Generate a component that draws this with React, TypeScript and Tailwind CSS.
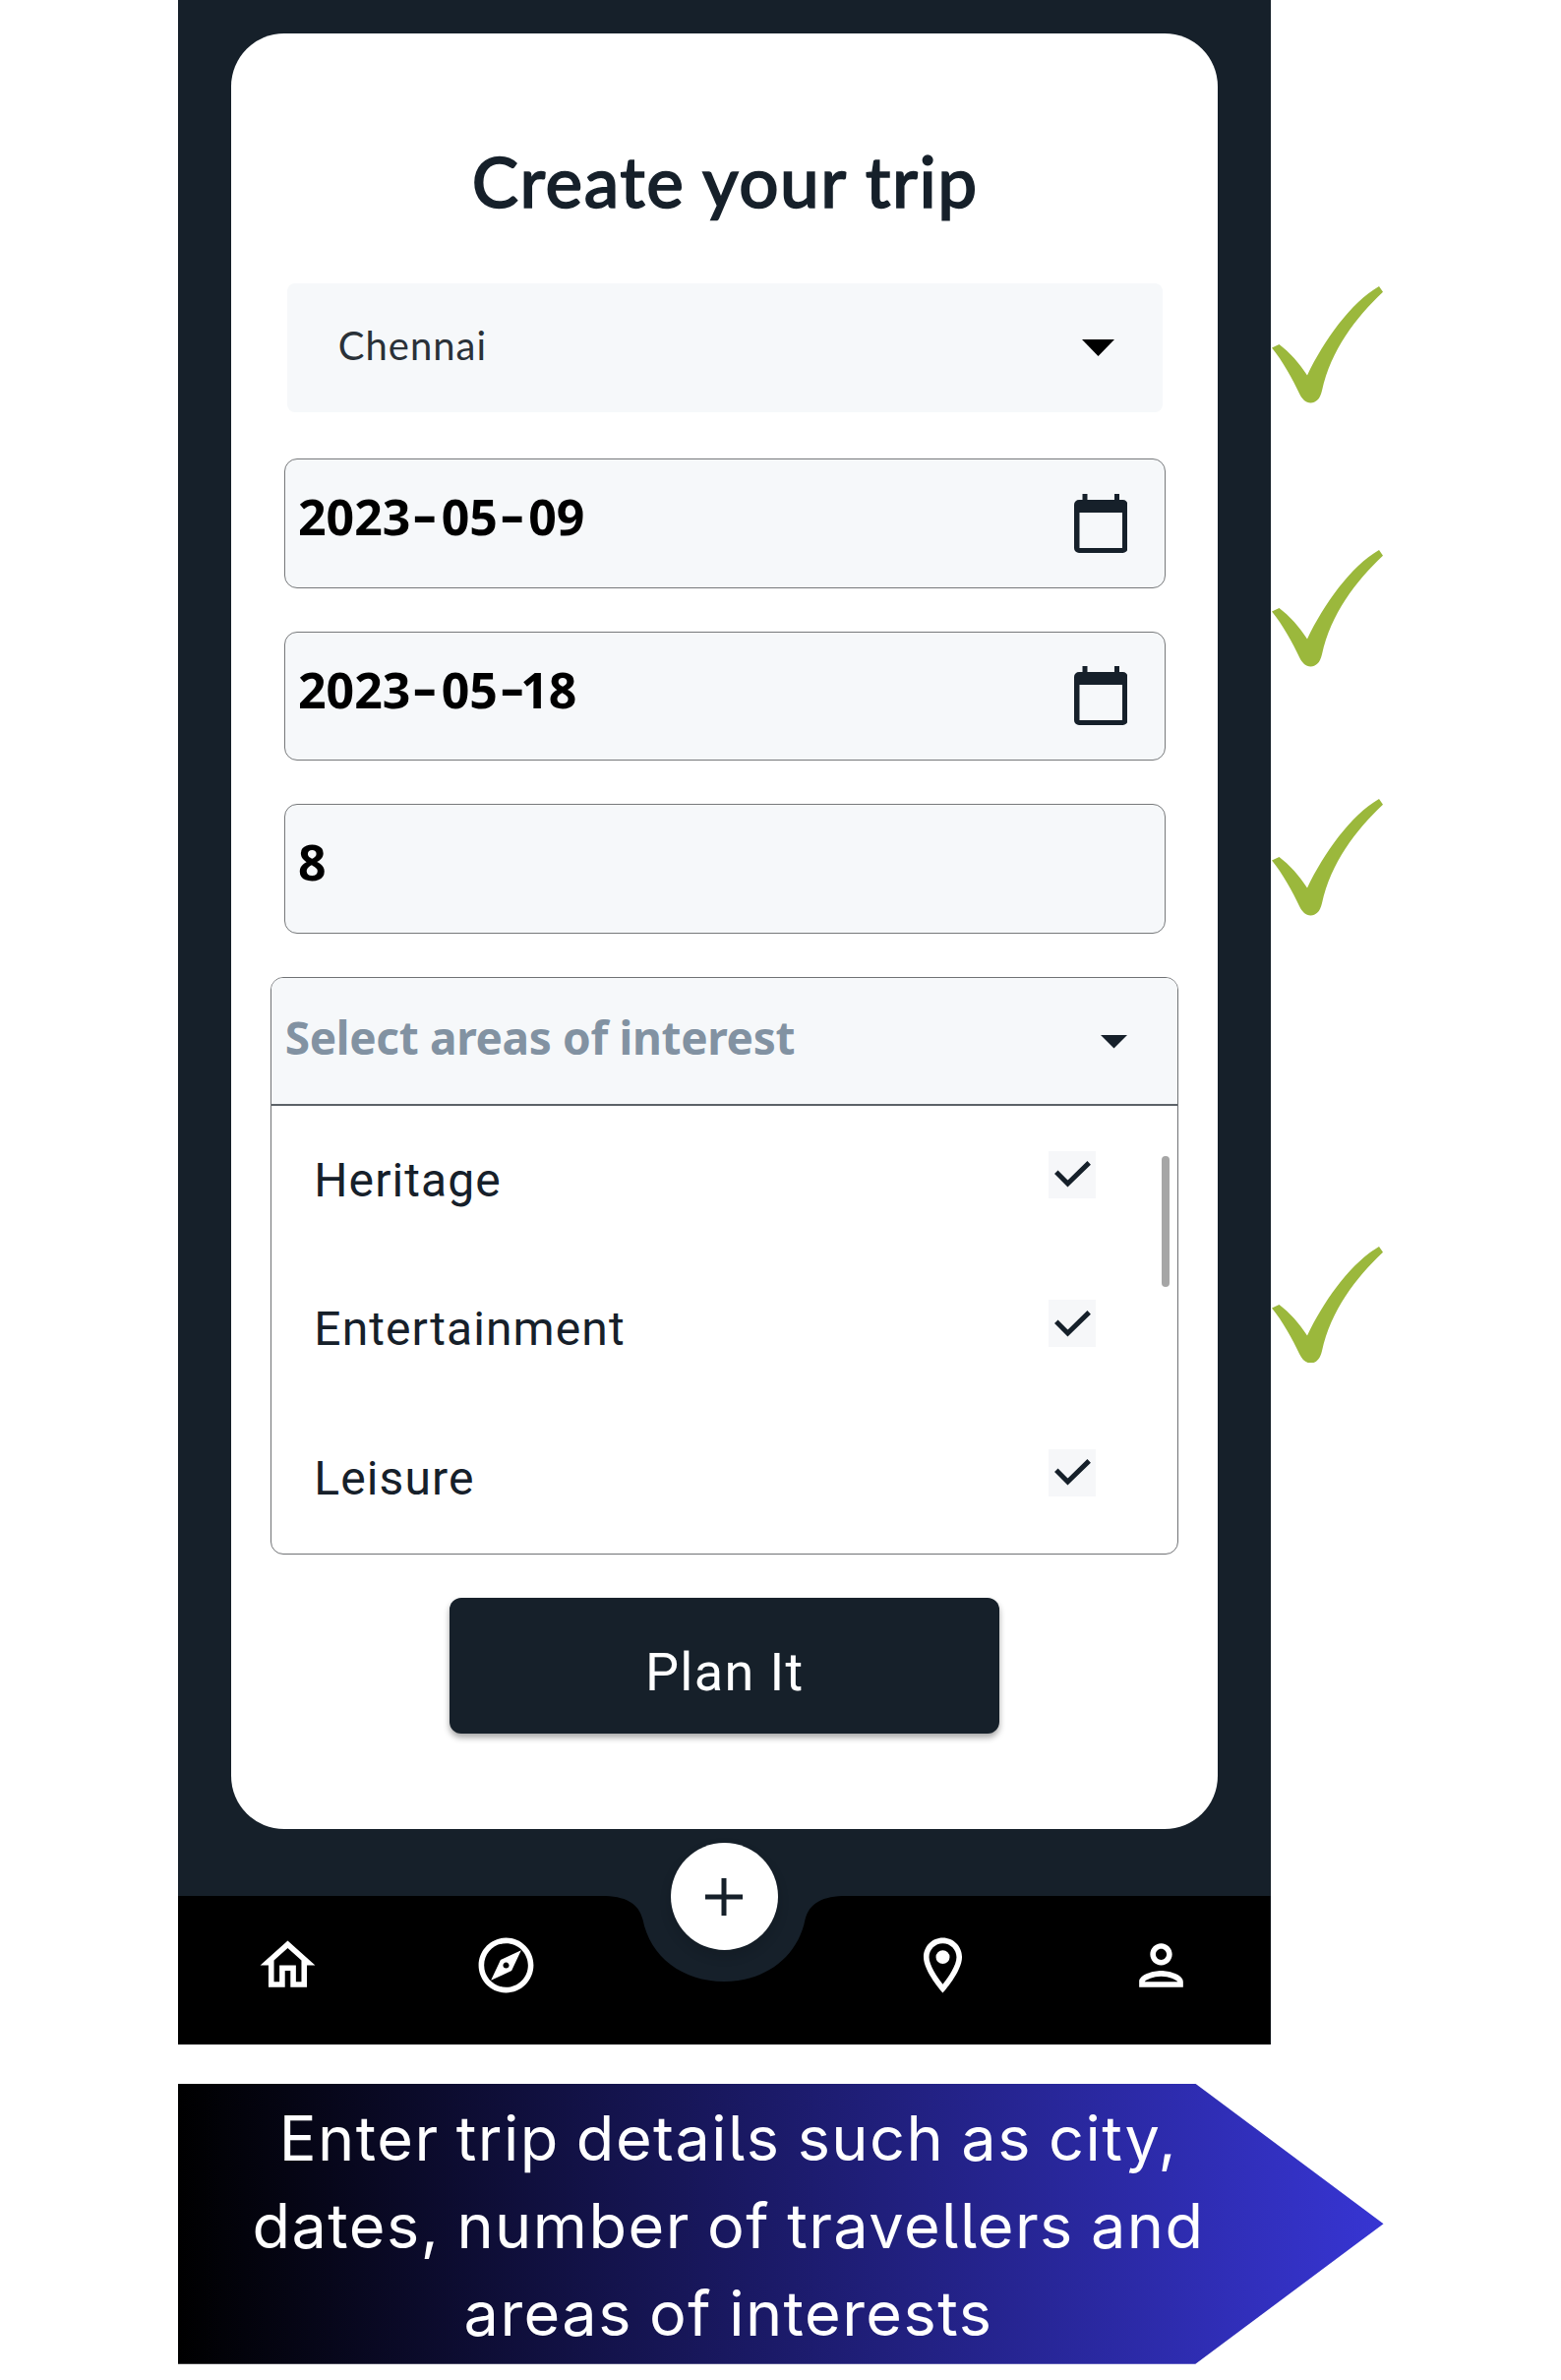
import type { ReactNode } from "react";

function GreenCheck({ className }: { className: string }) {
  return (
    <svg className={`h-[118.5px] w-[113px] shrink-0 ${className}`} viewBox="0 0 113 118.5" fill="#9bb83c">
      <path d="M0 62.5 L7.5 59 C18 67 28 78 36 90.5 C53 55 80 17 109 0 L113 5.7 C85 32 60 65 51 106 C49 115 44.5 118.4 39.5 118.4 C34.5 118.4 31 115 28 109 C21 94 11 76 0 62.5Z" />
    </svg>
  );
}

function CalendarIcon() {
  return (
    <svg className="h-[60px] w-[54.5px]" viewBox="0 0 54.5 60" fill="#16202a">
      <path
        fillRule="evenodd"
        d="M8.5 0h5v6h27.500v-6h5v6h3.500a5 5 0 0 1 5 5v44a5 5 0 0 1-5 5h-44.500a5 5 0 0 1-5-5v-44a5 5 0 0 1 5-5h3.500zM5.500 19v36h43.500v-36z"
      />
    </svg>
  );
}

function Dash() {
  return <span className="inline-block w-[31.3px] -translate-x-[1px] -translate-y-[3px] scale-x-150 text-center">-</span>;
}

function Field({ children, icon }: { children: ReactNode; icon?: ReactNode }) {
  return (
    <div className="flex h-[131.5px] w-[896px] items-center justify-between rounded-[13px] border border-[#77797b] bg-[#f6f8fa] pr-[38px] pl-[13px]">
      <div className="pb-[13px] font-['Noto_Sans',sans-serif] text-[50px] leading-[68px] font-bold text-black">{children}</div>
      {icon}
    </div>
  );
}

function InterestRow({ label }: { label: string }) {
  return (
    <div className="flex h-[151.5px] items-center justify-between pr-[83px] pl-[43px]">
      <span className="text-[48px] leading-[56px] tracking-[1.1px] text-[#16202a]">{label}</span>
      <span className="mb-[12px] flex h-[48px] w-[48px] items-center justify-center bg-[#f6f7f9]">
        <svg className="h-[27px] w-[37px]" viewBox="0 0 37 27" fill="none" stroke="#16202a" strokeWidth="5">
          <path d="M1.800 11.300 13.500 23 35.200 1.900" />
        </svg>
      </span>
    </div>
  );
}

const NAV_ICONS = [
  "M12 5.690l5 4.500V18h-2v-6H9v6H7v-7.810l5-4.500M12 3L2 12h3v8h6v-6h2v6h6v-8h3L12 3z",
  "M12 2C6.480 2 2 6.480 2 12s4.480 10 10 10 10-4.480 10-10S17.520 2 12 2zm0 18c-4.410 0-8-3.590-8-8s3.590-8 8-8 8 3.590 8 8-3.590 8-8 8zm-5.500-2.500l7.510-3.490L17.500 6.500 9.990 9.990 6.500 17.500zm5.500-6.600c.61 0 1.100.49 1.100 1.100s-.49 1.100-1.100 1.100-1.100-.49-1.100-1.100.49-1.100 1.100-1.100z",
  "",
  "M12 2C8.130 2 5 5.130 5 9c0 5.250 7 13 7 13s7-7.750 7-13c0-3.870-3.130-7-7-7zM7 9c0-2.760 2.240-5 5-5s5 2.240 5 5c0 2.880-2.880 7.190-5 9.880C9.920 16.210 7 11.850 7 9zM12 6.500a2.500 2.500 0 1 0 0 5 2.500 2.500 0 1 0 0-5z",
  "M12 6c1.100 0 2 .9 2 2s-.9 2-2 2-2-.9-2-2 .9-2 2-2m0 10c2.700 0 5.800 1.290 6 2H6c.23-.72 3.310-2 6-2m0-12C9.790 4 8 5.790 8 8s1.790 4 4 4 4-1.790 4-4-1.790-4-4-4zm0 10c-2.670 0-8 1.340-8 4v2h16v-2c0-2.660-5.330-4-8-4z",
];

export default function App() {
  return (
    <div className="flex h-[2419px] w-[1587px] flex-col bg-white pl-[181px] font-['Roboto',sans-serif]">
      <div className="flex h-[2078px]">
        <div className="flex w-[1110.500px] flex-col items-center bg-[#16202a]">
          <main className="mt-[33.500px] flex h-[1825.500px] w-[1002.500px] shrink-0 flex-col items-center rounded-[54px] bg-white">
            <h1 className="mt-[107.500px] h-[86px] pl-[2px] font-['Lato',sans-serif] text-[71px] leading-[86px] font-medium tracking-[1.500px] text-[#16202a] [-webkit-text-stroke:1.5px_#16202a] [stroke-linejoin:round]">
              Create your trip
            </h1>

            <div className="mt-[60.500px] ml-[1px] flex h-[131px] w-[890px] items-center justify-between rounded-[8px] bg-[#f6f8fa] pr-[49px] pl-[52px]">
              <span className="pb-[4px] font-['Lato',sans-serif] text-[40px] leading-[48px] tracking-[1px] text-[#2a3138]">Chennai</span>
              <svg className="h-[17px] w-[33px]" viewBox="0 0 33 17">
                <path d="M0 0H33L16.500 17Z" fill="#000" />
              </svg>
            </div>

            <div className="mt-[47.500px] ml-[1.500px] flex flex-col gap-[44px]">
              <Field icon={<CalendarIcon />}>
                2023<Dash />05<Dash />09
              </Field>
              <Field icon={<CalendarIcon />}>
                2023<Dash />05<Dash /><span className="-ml-[8px]">18</span>
              </Field>
              <Field>8</Field>
            </div>

            <section className="relative mt-[44px] ml-[1px] h-[587px] w-[923px] overflow-hidden rounded-[13px] border border-[#707275] bg-white">
              <div className="flex h-[130.500px] items-center justify-between border-b-2 border-[#5c6268] bg-[#f6f8fa] pr-[51px] pl-[13.500px]">
                <span className="pb-[8px] font-['Noto_Sans',sans-serif] text-[46px] leading-[62px] font-bold tracking-[-0.350px] text-[#8292a2]">
                  Select areas of interest
                </span>
                <svg className="mt-[2px] h-[13.500px] w-[27px]" viewBox="0 0 27 13.5">
                  <path d="M0 0H27L13.500 13.500Z" fill="#16202a" />
                </svg>
              </div>
              <InterestRow label="Heritage" />
              <InterestRow label="Entertainment" />
              <InterestRow label="Leisure" />
              <div className="absolute top-[181.500px] right-[8px] h-[133px] w-[8.500px] rounded-full bg-[#a6a6a6]" />
            </section>

            <button className="mt-[44.500px] flex h-[138px] w-[559px] items-center justify-center rounded-[12px] bg-[#16202a] pt-[13px] pl-[1px] text-[54px] leading-[64px] tracking-[1.350px] text-white shadow-[0_4px_6px_rgba(0,0,0,0.35)]">
              Plan It
            </button>
          </main>

          <nav className="relative mt-[68px] flex h-[151px] w-full">
            <svg className="absolute inset-0 h-[151px] w-[1110.500px]" viewBox="0 0 1110.5 151">
              <path
                d="M0 0H430C455 0 468 7 472.500 24C480 62 513 87 555 87C597 87 630 62 637.500 24C642 7 655 0 680 0H1110.500V151H0Z"
                fill="#000"
              />
            </svg>
            {NAV_ICONS.map((d, i) => (
              <div key={i} className="relative flex flex-1 justify-center pt-[37px]">
                {d ? (
                  <svg className="h-[67px] w-[67px]" viewBox="0 0 24 24" fill="#fff">
                    <path fillRule="evenodd" d={d} />
                  </svg>
                ) : (
                  <div className="absolute -top-[54.500px] flex h-[109px] w-[109px] items-center justify-center rounded-full bg-white shadow-[0_6px_12px_rgba(8,14,20,0.2)]">
                    <svg className="mt-[1px] h-[38px] w-[38px]" viewBox="0 0 38 38" stroke="#16202a" strokeWidth="5">
                      <path d="M19 0V38M0 19H38" />
                    </svg>
                  </div>
                )}
              </div>
            ))}
          </nav>
        </div>

        <div className="ml-[1.500px] flex flex-col">
          <GreenCheck className="mt-[291px]" />
          <GreenCheck className="mt-[149.500px]" />
          <GreenCheck className="mt-[134.500px]" />
          <GreenCheck className="mt-[336px]" />
        </div>
      </div>

      <div className="mt-[39.700px] h-[285px] w-[1225.500px] bg-linear-to-r/srgb from-black to-[#3735d3] pt-[11px] [clip-path:polygon(0_0,84.4%_0,100%_50%,84.4%_100%,0_100%)]">
        <p className="w-[1119px] text-center font-['Inter',sans-serif] text-[63px] leading-[89px] tracking-[1.450px] text-white [font-feature-settings:'cv05'] [word-spacing:-2px]">
          Enter trip details such as city,
          <br />
          dates, number of travellers and
          <br />
          areas of interests
        </p>
      </div>
    </div>
  );
}
